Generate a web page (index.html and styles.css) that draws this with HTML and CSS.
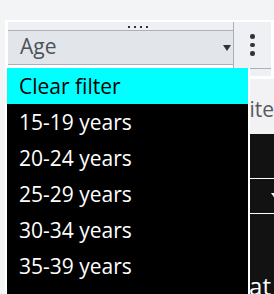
FILE: index.html
```html
<!DOCTYPE html>
<html>
<head>
<meta charset="utf-8">
<link rel="stylesheet" href="styles.css">
</head>
<body>
<div class="frame">
  <div class="header">
    <div class="filter">
      <div class="handle"><i></i><i></i><i></i><i></i></div>
      <div class="select"><span class="label">Age</span><span class="caret"></span></div>
    </div>
    <div class="kebab"><i></i><i></i><i></i></div>
  </div>
  <div class="content">
    <div class="strip"></div>
    <div class="title">Website</div>
    <div class="table">
      <div class="trow r1"></div>
      <div class="trow r2"><span class="tcaret"></span></div>
      <div class="trow r3">Format</div>
    </div>
  </div>
  <ul class="menu">
    <li class="item active">Clear filter</li>
    <li class="item">15-19 years</li>
    <li class="item">20-24 years</li>
    <li class="item">25-29 years</li>
    <li class="item">30-34 years</li>
    <li class="item">35-39 years</li>
    <li class="item">40-44 years</li>
  </ul>
</div>
</body>
</html>
```

FILE: styles.css
```css
html, body {
  margin: 0;
  padding: 0;
  height: 294px;
  overflow: hidden;
}
body {
  background: #f3f4f6;
  font-family: "Open Sans", "Noto Sans", sans-serif;
}
.frame {
  position: relative;
  margin: 20px 0 0 5px;
  padding: 2px 0 0 3px;
  height: 274px;
  box-sizing: border-box;
  background: #ffffff;
}
.header {
  display: flex;
  width: 263px;
}
.filter {
  width: 225px;
  border-right: 1px solid #aab0bb;
  display: flex;
  flex-direction: column;
}
.handle {
  height: 9px;
  box-sizing: border-box;
  padding: 4px 0 0 120px;
  background: #eff0f3;
  border-bottom: 1px solid #aab0bb;
  display: flex;
  align-items: flex-start;
  gap: 4px;
}
.handle i {
  display: block;
  width: 2px;
  height: 2px;
  background: #333;
}
.select {
  height: 33px;
  background: #e2e5e9;
  border-bottom: 1px solid #aab0bb;
  display: flex;
  align-items: flex-start;
  justify-content: space-between;
  padding: 0 2px 0 12px;
}
.label {
  font-size: 21px;
  line-height: 30px;
  color: #4d5258;
}
.caret {
  width: 0;
  height: 0;
  margin-top: 14px;
  border-left: 4px solid transparent;
  border-right: 4px solid transparent;
  border-top: 6px solid #333;
}
.kebab {
  width: 37px;
  height: 46px;
  background: #eff0f3;
  border-bottom: 1px solid #aab0bb;
  display: flex;
  flex-direction: column;
  align-items: center;
  justify-content: center;
  gap: 4px;
}
.kebab i {
  display: block;
  width: 4.5px;
  height: 4.5px;
  border-radius: 50%;
  background: #333;
}
.content {
  width: 272px;
}
.strip {
  width: 263px;
  height: 7px;
  background: #eff0f3;
  margin-bottom: 3px;
}
.title {
  height: 55px;
  box-sizing: border-box;
  padding: 16px 0 0 0;
  background: #f2f2f4;
  font-size: 21px;
  line-height: 28px;
  color: #555a60;
  text-align: right;
  width: 266px;
}
.table {
  background: #121212;
  color: #ffffff;
}
.trow {
  box-sizing: border-box;
}
.r1 {
  height: 45px;
  border-bottom: 1px solid #ffffff;
}
.r2 {
  height: 35px;
  border-bottom: 1px solid #ffffff;
  display: flex;
  align-items: center;
  justify-content: flex-end;
}
.tcaret {
  width: 0;
  height: 0;
  margin-right: -1px;
  border-left: 5px solid transparent;
  border-right: 5px solid transparent;
  border-top: 7px solid #ffffff;
}
.r3 {
  height: 120px;
  padding-top: 56px;
  font-size: 24px;
  line-height: 32px;
  width: 263px;
  text-align: right;
}
.menu {
  position: absolute;
  left: 2px;
  top: 48px;
  width: 241px;
  margin: 0;
  padding: 0;
  list-style: none;
  background: #000000;
  border-right: 2px solid #ffffff;
}
.item {
  height: 36px;
  line-height: 36px;
  font-size: 21px;
  color: #ffffff;
  padding-left: 12px;
  white-space: nowrap;
}
.item.active {
  background: #00ffff;
  color: #000000;
}
```
